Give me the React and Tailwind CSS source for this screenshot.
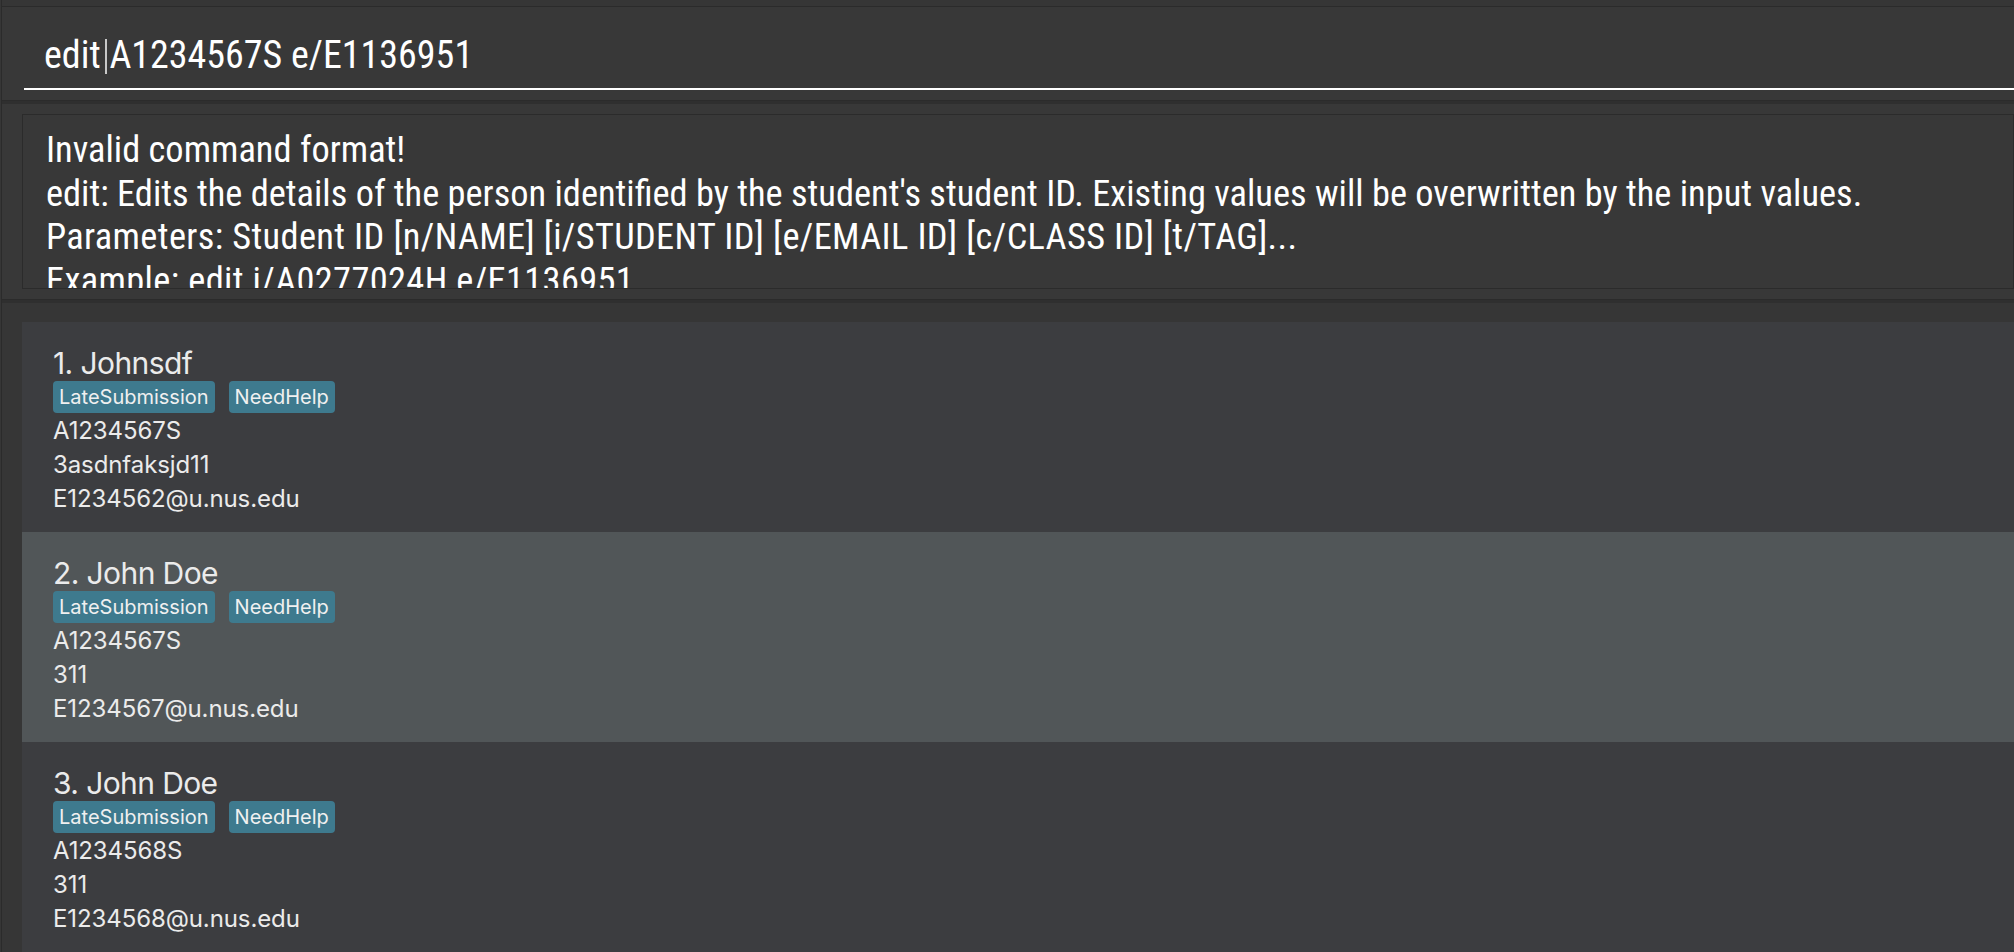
import React from "react";

const persons = [
  { n: "1. Johnsdf", id: "A1234567S", c: "3asdnfaksjd11", e: "E1234562@u.nus.edu", sel: false },
  { n: "2. John Doe", id: "A1234567S", c: "311", e: "E1234567@u.nus.edu", sel: true },
  { n: "3. John Doe", id: "A1234568S", c: "311", e: "E1234568@u.nus.edu", sel: false },
];

const cond = { fontFamily: '"Roboto Condensed", "Liberation Sans Narrow", "DejaVu Sans Condensed", Roboto, sans-serif' };

function Card({ p }) {
  return (
    <div className={`${p.sel ? "bg-[#515658]" : "bg-[#3c3d40]"} h-[210px] pl-[31px] pt-[23px] text-[#ebebeb]`} style={{ fontFamily: 'Inter, "Noto Sans", sans-serif' }}>
      <div className="text-[30px] leading-[36px] tracking-[-0.6px]">{p.n}</div>
      <div className="flex gap-[14px]">
        <span className="h-[32px] px-[6px] rounded-[4px] bg-[#3e7a8e] text-[20px] leading-[32px] text-[#f0f0f0]">LateSubmission</span>
        <span className="h-[32px] px-[6px] rounded-[4px] bg-[#3e7a8e] text-[20px] leading-[32px] text-[#f0f0f0]">NeedHelp</span>
      </div>
      <div className="mt-[1px] text-[24px] leading-[34px] tracking-[-0.1px]">
        <div>{p.id}</div>
        <div>{p.c}</div>
        <div>{p.e}</div>
      </div>
    </div>
  );
}

export default function App() {
  return (
    <div className="w-[2014px] h-[952px] overflow-hidden bg-[#363636] flex">
      <div className="w-px shrink-0" />
      <div className="flex-1 border-l border-[#2b2b2b] flex flex-col min-w-0">
        <div className="h-[6px] shrink-0" />
        <div className="h-[95px] shrink-0 border-t border-b border-[#2b2b2b] bg-[#383838] pl-[22px] pt-[22px]">
          <div className="h-[61px] border-b-2 border-white pl-[20px] pt-[5px] text-white text-[38px] leading-[42px] whitespace-nowrap" style={cond}>
            edit<span className="relative">{" "}<span className="absolute left-[4px] top-[6px] w-[2px] h-[35px] bg-[#c8c8c8]" /></span>A1234567S e/E1136951
          </div>
        </div>
        <div className="h-[3px] shrink-0 bg-[#2f2f2f]" />
        <div className="h-[196px] shrink-0 border-b border-[#2b2b2b] bg-[#383838] pl-[20px] pt-[10px]">
          <div className="h-[175px] border border-[#2b2b2b] overflow-hidden pl-[23px] pt-[13px] text-white text-[36.4px] leading-[43.7px] whitespace-nowrap" style={cond}>
            <div>Invalid command format!</div>
            <div>edit: Edits the details of the person identified by the student's student ID. Existing values will be overwritten by the input values.</div>
            <div className="tracking-[0.35px]">Parameters: Student ID [n/NAME] [i/STUDENT ID] [e/EMAIL ID] [c/CLASS ID] [t/TAG]...</div>
            <div className="tracking-[0.35px]">Example: edit i/A0277024H e/E1136951</div>
          </div>
        </div>
        <div className="h-[3px] shrink-0 bg-[#2f2f2f]" />
        <div className="flex-1 bg-[#363636] pl-[20px] pt-[19px] overflow-hidden">
          {persons.map((p) => (
            <Card key={p.n} p={p} />
          ))}
        </div>
      </div>
    </div>
  );
}
